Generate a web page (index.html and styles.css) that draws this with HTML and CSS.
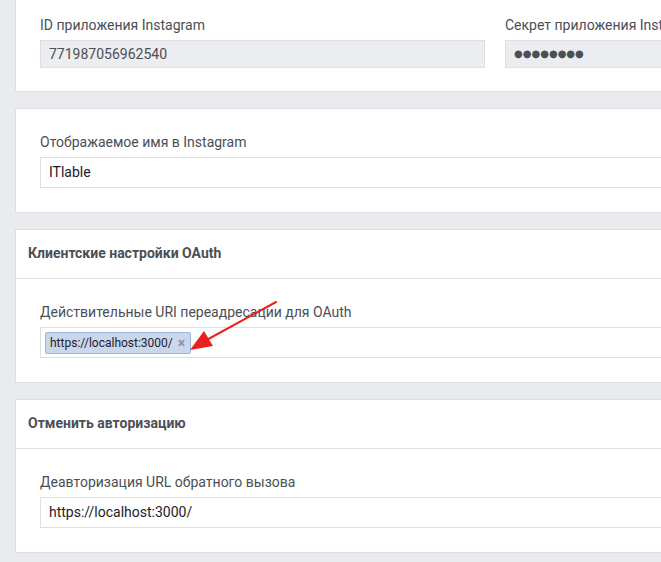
FILE: index.html
```html
<!DOCTYPE html>
<html lang="ru">
<head>
<meta charset="utf-8">
<title>Настройки Instagram</title>
<link rel="stylesheet" href="styles.css">
</head>
<body>
<div class="page">
  <section class="card card-first">
    <div class="card-body">
      <div class="cols">
        <div class="field">
          <label class="label">ID приложения Instagram</label>
          <div class="input input-disabled">771987056962540</div>
        </div>
        <div class="field">
          <label class="label">Секрет приложения Instagram</label>
          <div class="input input-disabled dots">●●●●●●●●</div>
        </div>
      </div>
    </div>
  </section>

  <section class="card">
    <div class="card-body">
      <div class="field">
        <label class="label">Отображаемое имя в Instagram</label>
        <div class="input">ITlable</div>
      </div>
    </div>
  </section>

  <section class="card">
    <div class="card-header">Клиентские настройки OAuth</div>
    <div class="card-body">
      <div class="field">
        <label class="label">Действительные URI переадресации для OAuth</label>
        <div class="input input-tags">
          <span class="tag">https://localhost:3000/<span class="tag-x">×</span></span>
        </div>
      </div>
    </div>
    <svg class="arrow" width="90" height="60" viewBox="0 0 90 60">
      <line x1="87" y1="2" x2="14" y2="42" stroke="#e8201f" stroke-width="2" stroke-linecap="round"/>
      <polygon points="1,50 15,31 24,46" fill="#e8201f"/>
    </svg>
  </section>

  <section class="card">
    <div class="card-header">Отменить авторизацию</div>
    <div class="card-body">
      <div class="field">
        <label class="label">Деавторизация URL обратного вызова</label>
        <div class="input">https://localhost:3000/</div>
      </div>
    </div>
  </section>
</div>
</body>
</html>
```
FILE: styles.css
```css
html, body {
  margin: 0;
  padding: 0;
  background: #e9ebee;
  overflow: hidden;
}
body {
  font-family: Roboto, "Noto Sans", sans-serif;
  color: #1d2129;
}
.page {
  width: 960px;
  margin-left: 15px;
  margin-top: -10px;
  display: flex;
  flex-direction: column;
  gap: 16px;
}
.card {
  position: relative;
  background: #fff;
  border: 1px solid #dddfe2;
}
.card-header {
  height: 49px;
  box-sizing: border-box;
  padding: 14px 12px 0;
  font-weight: bold;
  font-size: 14px;
  line-height: 18px;
  color: #4b4f56;
  border-bottom: 1px solid #dddfe2;
}
.card-body {
  padding: 24px;
}
.card-first .card-body {
  padding: 25px 24px 23px;
}
.cols {
  display: grid;
  grid-template-columns: 445px 445px;
  gap: 20px;
}
.field {
  display: flex;
  flex-direction: column;
  gap: 6px;
}
.label {
  font-size: 14px;
  line-height: 18px;
  color: #4b4f56;
}
.input {
  height: 31px;
  box-sizing: border-box;
  border: 1px solid #dddfe2;
  background: #fff;
  padding: 0 8px;
  font-size: 14px;
  line-height: 29px;
  color: #1d2129;
}
.input-disabled {
  height: 28px;
  line-height: 26px;
  background: #ebedf0;
  color: #4b4f56;
  border-color: #dddfe2;
}
.dots {
  font-family: "DejaVu Sans", sans-serif;
  font-size: 10px;
  letter-spacing: 0;
  color: #4b4f56;
}
.input-tags {
  padding: 4px;
  display: flex;
  align-items: flex-start;
}
.tag {
  display: inline-flex;
  align-items: center;
  height: 22px;
  box-sizing: border-box;
  padding: 0 5px 0 4px;
  background: #c9d6ec;
  border: 1px solid #9cb4d8;
  border-radius: 2px;
  font-size: 12px;
  line-height: 20px;
  color: #1d2129;
}
.tag-x {
  margin-left: 5px;
  color: #8d949e;
  font-size: 14px;
  font-weight: bold;
}
.arrow {
  position: absolute;
  left: 173px;
  top: 70px;
}
```
